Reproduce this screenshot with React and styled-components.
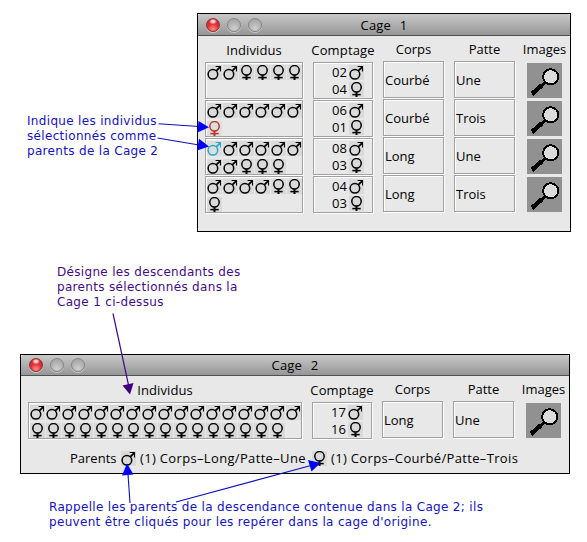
import React from "react";
import styled, { createGlobalStyle } from "styled-components";

const GlobalStyle = createGlobalStyle`
  body { margin: 0; background: #fff; }
  *, *::before, *::after { box-sizing: border-box; }
`;

const Page = styled.main`
  position: relative;
  width: 587px;
  height: 542px;
  overflow: hidden;
  background: #fff;
  font-family: "Open Sans", "Noto Sans", sans-serif;
  font-size: 13px;
  color: #000;
`;

const TopSection = styled.section`
  display: flex;
  align-items: flex-start;
  height: 265px;
  padding: 13px 16px 0 27px;
`;

const Note = styled.p`
  margin: ${(p) => p.$margin || "0"};
  width: ${(p) => p.$width}px;
  flex: none;
  font-family: "DejaVu Sans", Verdana, sans-serif;
  font-size: 12px;
  line-height: 15px;
  letter-spacing: 0.32px;
  white-space: pre;
  color: ${(p) => (p.$tone === "purple" ? "#3f0c82" : "#1512bd")};
`;

const Window = styled.section`
  flex: none;
  width: ${(p) => p.$width}px;
  height: ${(p) => p.$height}px;
  margin-left: ${(p) => p.$left || 0}px;
  border: 1px solid #000;
  background: #e8e8e8;
`;

const TitleBar = styled.header`
  display: grid;
  grid-template-columns: 70px 1fr 78px;
  align-items: center;
  height: ${(p) => p.$height}px;
  padding-left: 8px;
  border-bottom: 1px solid #515151;
  border-radius: 3px 3px 0 0;
  background: linear-gradient(#c8c8c8, #969696);
`;

const Lights = styled.div`
  display: flex;
  gap: 7px;
`;

const Light = styled.span`
  width: 14px;
  height: 14px;
  border: 1px solid ${(p) => (p.$on ? "#8c3434" : "#858585")};
  border-radius: 50%;
  background: ${(p) =>
    p.$on
      ? "radial-gradient(ellipse 4px 3px at 50% 20%, #fff 0%, #ffb5b5 45%, transparent 100%), radial-gradient(circle at 50% 85%, #ff8d85 0%, #e23136 45%, #b71f26 100%)"
      : "radial-gradient(circle at 50% 80%, #cfcfcf 0%, #b4b4b4 50%, #a0a0a0 100%)"};
  box-shadow: 0 1px 0 rgba(255, 255, 255, 0.45);
`;

const Title = styled.h1`
  margin: 0;
  font-size: 13px;
  font-weight: 400;
  line-height: 18px;
  text-align: center;
  white-space: pre;
  letter-spacing: 0.2px;
  word-spacing: 0.8px;
`;

const Table = styled.div`
  display: flex;
  padding-left: 7px;
`;

const Column = styled.div`
  flex: none;
  width: ${(p) => p.$width}px;
  margin-right: ${(p) => p.$gap || 0}px;
  padding-top: ${(p) => p.$top}px;
`;

const ColumnHead = styled.div`
  display: flex;
  justify-content: center;
  height: 20px;
  line-height: 16px;
  white-space: nowrap;
  letter-spacing: ${(p) => p.$track || 0}px;
`;

const Etched = styled.div`
  height: 37px;
  margin-bottom: 1px;
  border: 1px solid #a0a0a0;
  box-shadow: 1px 1px 0 #fff, inset 1px 1px 0 #fff;
`;

const Symbols = styled(Etched)`
  display: flex;
  flex-wrap: wrap;
  align-content: flex-start;
  gap: 3px 1px;
  padding: 2px 0 0 1px;
`;

const Counts = styled(Etched)`
  display: flex;
  flex-direction: column;
  padding: 2px 0 0 18px;
  gap: 2px;
`;

const Count = styled.div`
  display: flex;
  align-items: center;
  height: 15px;
  gap: 2px;
  line-height: 15px;
`;

const Value = styled(Etched)`
  display: flex;
  align-items: center;
  padding: 1px 0 0 1px;
  line-height: 18px;
`;

const LensList = styled.div`
  padding-top: 2px;
`;

const LensTile = styled.div`
  width: 35px;
  height: 35px;
  margin-bottom: 3px;
  background: #919191;
`;

const SymbolTile = styled.span`
  flex: none;
  width: 15px;
  height: 15px;
  color: ${(p) => p.$color || "#000"};
  background: ${(p) => (p.$color ? "#dedede" : "#dadada")};
`;

const Parents = styled.div`
  display: flex;
  align-items: center;
  height: 20px;
  margin-top: 7px;
  padding-left: 49px;
  line-height: 20px;
  white-space: nowrap;
`;

const ParentText = styled.span`
  flex: none;
  width: ${(p) => p.$width}px;
  padding-left: ${(p) => p.$indent || 0}px;
  letter-spacing: ${(p) => p.$track || 0}px;
`;

const Drawing = styled.svg`
  display: block;
`;

const Arrows = styled.svg`
  position: absolute;
  inset: 0;
  pointer-events: none;
`;

function Sex({ kind, color }) {
  return (
    <SymbolTile $color={color}>
      <Drawing width="15" height="15" viewBox="0 0 15 15" fill="none" stroke="currentColor">
        {kind === "m" ? (
          <>
            <circle cx="5.9" cy="9.3" r="4.8" strokeWidth="1.5" />
            <path d="M9 6.2L13.3 1.8" strokeWidth="1.8" />
            <path d="M8.6 1.5H13.5V6.4" strokeWidth="1.1" />
          </>
        ) : (
          <>
            <circle cx="7.5" cy="5.3" r="4.7" strokeWidth="1.5" />
            <path d="M7.5 10V15" strokeWidth="2" />
            <path d="M3.3 12.6H11.7" strokeWidth="1.5" />
          </>
        )}
      </Drawing>
    </SymbolTile>
  );
}

function Lens() {
  return (
    <LensTile>
      <Drawing width="35" height="35" viewBox="0 0 35 35" fill="none" stroke="#000" shapeRendering="crispEdges">
        <path d="M18.5 19L14 23.5" strokeWidth="2.2" />
        <path d="M14.5 22.5L5 31" strokeWidth="4.6" />
        <circle cx="23.7" cy="13.8" r="7.6" strokeWidth="2" fill="#dcdcdc" />
      </Drawing>
    </LensTile>
  );
}

const RED = "#b8382a";
const CYAN = "#25a9cb";

const cage1 = [
  { symbols: "mmffff", counts: ["02", "04"], corps: "Courbé", patte: "Une" },
  { symbols: "mmmmmmf", counts: ["06", "01"], corps: "Courbé", patte: "Trois", marked: { 6: RED } },
  { symbols: "mmmmmmmmfff", counts: ["08", "03"], corps: "Long", patte: "Une", marked: { 0: CYAN } },
  { symbols: "mmmmfff", counts: ["04", "03"], corps: "Long", patte: "Trois" },
];

const cage2 = [
  { symbols: "m".repeat(17) + "f".repeat(16), counts: ["17", "16"], corps: "Long", patte: "Une" },
];

function Cage({ title, rows, width, height, left, barHeight, symbolsWidth, children }) {
  return (
    <Window $width={width} $height={height} $left={left}>
      <TitleBar $height={barHeight}>
        <Lights>
          <Light $on />
          <Light />
          <Light />
        </Lights>
        <Title>{title}</Title>
      </TitleBar>
      <Table>
        <Column $width={symbolsWidth} $gap={10} $top={6}>
          <ColumnHead $track={0.1}>Individus</ColumnHead>
          {rows.map((row, i) => (
            <Symbols key={i}>
              {[...row.symbols].map((s, j) => (
                <Sex key={j} kind={s} color={row.marked?.[j]} />
              ))}
            </Symbols>
          ))}
        </Column>
        <Column $width={60} $gap={10} $top={6}>
          <ColumnHead $track={0.15}>Comptage</ColumnHead>
          {rows.map((row, i) => (
            <Counts key={i}>
              <Count>{row.counts[0]}<Sex kind="m" /></Count>
              <Count>{row.counts[1]}<Sex kind="f" /></Count>
            </Counts>
          ))}
        </Column>
        <Column $width={61} $gap={10} $top={5}>
          <ColumnHead>Corps</ColumnHead>
          {rows.map((row, i) => <Value key={i}>{row.corps}</Value>)}
        </Column>
        <Column $width={61} $gap={12} $top={5}>
          <ColumnHead>Patte</ColumnHead>
          {rows.map((row, i) => <Value key={i}>{row.patte}</Value>)}
        </Column>
        <Column $width={35} $top={5}>
          <ColumnHead>Images</ColumnHead>
          <LensList>
            {rows.map((_, i) => <Lens key={i} />)}
          </LensList>
        </Column>
      </Table>
      {children}
    </Window>
  );
}

export default function App() {
  return (
    <Page>
      <GlobalStyle />
      <TopSection>
        <Note $width={170} $margin="101px 0 0">
          {"Indique les individus\nsélectionnés comme\nparents de la Cage 2"}
        </Note>
        <Cage title="Cage  1" rows={cage1} width={374} height={219} barHeight={22} symbolsWidth={98} />
      </TopSection>
      <Note $tone="purple" $width={200} $margin="0 0 44px 57px">
        {"Désigne les descendants des\nparents sélectionnés dans la\nCage 1 ci-dessus"}
      </Note>
      <Cage title="Cage  2" rows={cage2} width={550} height={120} left={20} barHeight={21} symbolsWidth={274}>
        <Parents>
          <ParentText $width={51}>Parents</ParentText>
          <Sex kind="m" />
          <ParentText $width={176} $indent={4} $track={0.34}>(1) Corps–Long/Patte–Une</ParentText>
          <Sex kind="f" />
          <ParentText $width={200} $indent={4} $track={0.34}>(1) Corps–Courbé/Patte–Trois</ParentText>
        </Parents>
      </Cage>
      <Note $width={500} $margin="26px 0 0 49px">
        {"Rappelle les parents de la descendance contenue dans la Cage 2; ils\npeuvent être cliqués pour les repérer dans la cage d'origine."}
      </Note>
      <Arrows width="587" height="542" viewBox="0 0 587 542">
        <g stroke="#1010b4" strokeWidth="1.1">
          <path d="M158.5 123.8L199 126.5" />
          <path d="M157.5 138L199 145" />
          <path d="M130 503L128 474" />
          <path d="M176 502L311 465.5" />
        </g>
        <g fill="#0000fa">
          <path d="M209 127.3L197.5 132.5L198.5 121Z" />
          <path d="M209 146.5L197 150.5L199 138.8Z" />
          <path d="M127 463.5L133.5 474.5L122 475.5Z" />
          <path d="M320.5 463L311.5 471.5L308 460Z" />
        </g>
        <path d="M113 313.5L128.5 385" stroke="#3f0c82" strokeWidth="1.2" />
        <path d="M130 394.5L122.5 385.5L133.5 383Z" fill="#42007f" />
      </Arrows>
    </Page>
  );
}
